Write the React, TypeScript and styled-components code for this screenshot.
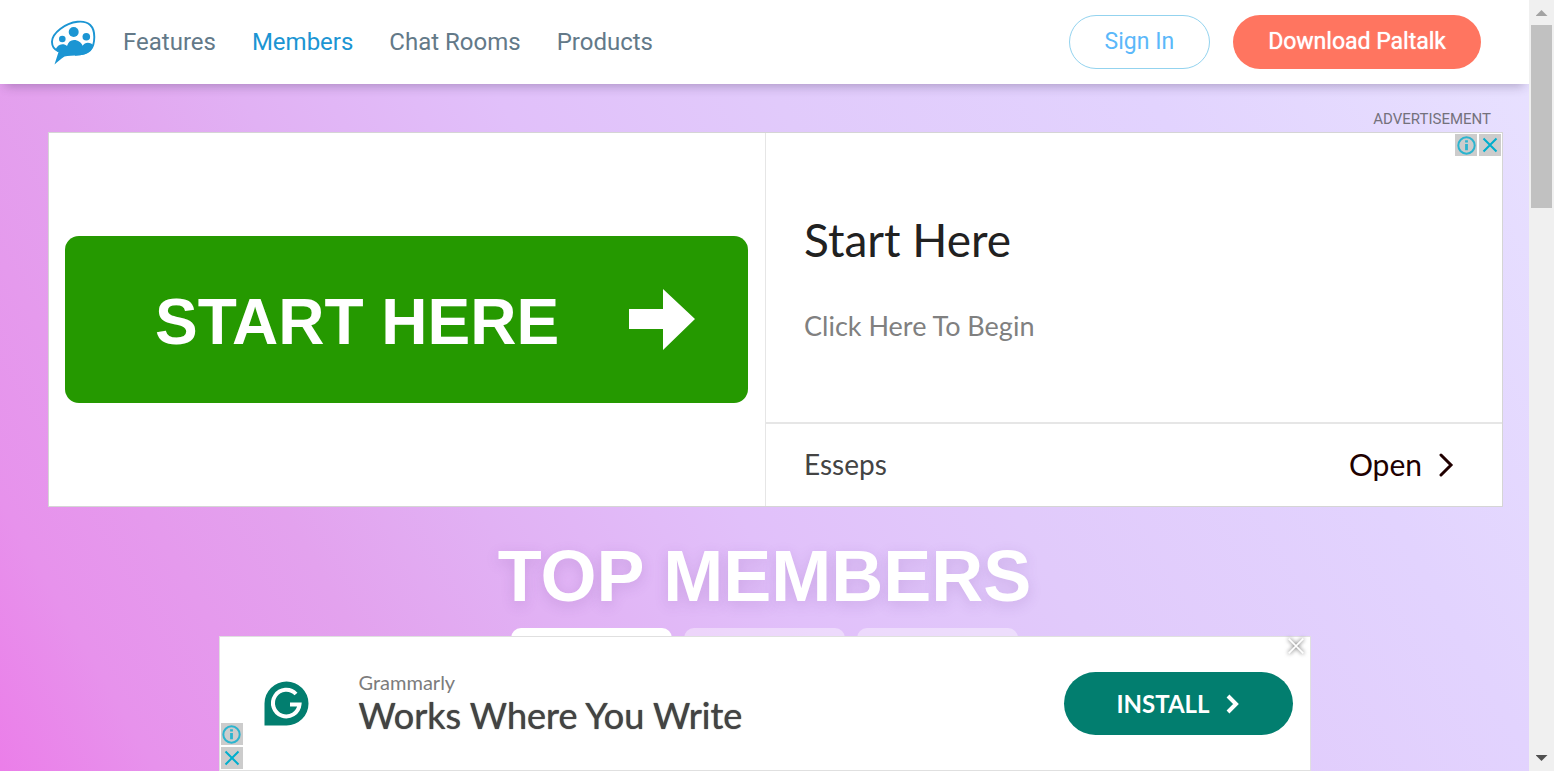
import React from "react";
import styled, { createGlobalStyle } from "styled-components";

const GlobalStyle = createGlobalStyle`
  *, *::before, *::after { box-sizing: border-box; }
  body {
    margin: 0;
    font-family: Roboto, "Liberation Sans", sans-serif;
    overflow: hidden;
  }
  button { font: inherit; border: 0; padding: 0; background: none; cursor: pointer; }
  a { color: inherit; text-decoration: none; }
  svg { display: block; flex: none; }
`;

const Window = styled.div`
  display: grid;
  grid-template-columns: minmax(0, 1fr) 25px;
  height: 100vh;
`;

const Page = styled.div`
  position: relative;
  display: flex;
  flex-direction: column;
  overflow: hidden;
  background: linear-gradient(
    60deg,
    #eb7ee9 0%,
    #e792ec 8%,
    #e3a2ee 22%,
    #e1b1f4 32%,
    #e1c0fa 45%,
    #e1cafb 59%,
    #e2d3fe 78%,
    #e8e2ff 100%
  );
`;

const Header = styled.header`
  display: flex;
  align-items: center;
  justify-content: space-between;
  flex: none;
  height: 84px;
  padding: 0 48px 0 50px;
  background: #fff;
  box-shadow: 0 7px 10px -5px rgba(60, 40, 80, 0.32);
`;

const HeaderSide = styled.div<{ $gap: number }>`
  display: flex;
  align-items: center;
  gap: ${(p) => p.$gap}px;
`;

const Nav = styled.nav`
  display: flex;
  gap: 36px;
`;

const NavLink = styled.a<{ $active?: boolean }>`
  font-size: 24px;
  line-height: 28px;
  color: ${(p) => (p.$active ? "#1b95d3" : "#637988")};
`;

const PillButton = styled.button<{ $solid?: boolean }>`
  height: 54px;
  padding: 0 35px 2px;
  border-radius: 27px;
  border: ${(p) => (p.$solid ? "0" : "1px solid #93d3ef")};
  background: ${(p) => (p.$solid ? "#ff7560" : "#fff")};
  color: ${(p) => (p.$solid ? "#fff" : "#5bb8fa")};
  font-size: 23px;
  text-shadow: ${(p) => (p.$solid ? "0 0 1px #fff" : "none")};
  white-space: nowrap;
`;

const Main = styled.main`
  display: flex;
  flex-direction: column;
  padding: 26px 26px 0 48px;
`;

const AdLabel = styled.div`
  padding-right: 12px;
  text-align: right;
  font-size: 15px;
  line-height: 18px;
  color: #74717c;
`;

const adFont = `Lato, "Open Sans", sans-serif`;

const TopAd = styled.section`
  position: relative;
  display: grid;
  grid-template-columns: 717px minmax(0, 1fr);
  height: 375px;
  margin-top: 4px;
  border: 1px solid #d5d5d5;
  background: #fff;
  font-family: ${adFont};
`;

const AdPicture = styled.a`
  display: flex;
  align-items: center;
  padding: 0 17px 0 16px;
  border-right: 1px solid #e6e6e6;
`;

const StartBanner = styled.span`
  display: flex;
  align-items: center;
  justify-content: space-between;
  flex: 1;
  height: 167px;
  padding: 0 53px 0 90px;
  border-radius: 14px;
  background: #259900;
  color: #fff;
  font: bold 64px/76px "Liberation Sans", Arial, sans-serif;
  white-space: nowrap;
`;

const StartText = styled.span`
  padding-top: 4px;
`;

const AdBody = styled.div`
  display: flex;
  flex-direction: column;
`;

const AdCopy = styled.div`
  flex: 1;
  padding: 77px 38px 0;
  border-bottom: 2px solid #e6e6e6;
`;

const AdTitle = styled.h2`
  margin: 0;
  font-size: 46px;
  line-height: 60px;
  font-weight: 400;
  color: #212121;
`;

const AdText = styled.p`
  margin: 38px 0 0;
  font-size: 27px;
  line-height: 36px;
  color: #808080;
`;

const AdFooter = styled.div`
  display: flex;
  align-items: center;
  justify-content: space-between;
  height: 82px;
  padding: 0 48px 2px 38px;
  font-size: 28px;
  color: #444;
`;

const OpenLink = styled.a`
  display: flex;
  align-items: center;
  gap: 16px;
  font-size: 30px;
  color: #200000;
`;

const AdChoices = styled.div<{ $vertical?: boolean }>`
  position: absolute;
  display: flex;
  gap: 2px;
  ${(p) =>
    p.$vertical
      ? "flex-direction: column; left: 1px; bottom: 1px;"
      : "top: 1px; right: 1px;"}
`;

const ChoiceButton = styled.button`
  display: grid;
  place-items: center;
  width: 22px;
  height: 22px;
  background: #ccc;
`;

const PageTitle = styled.h1`
  margin: 27px 0 0;
  text-align: center;
  font: bold 72px/84px "Liberation Sans", Arial, sans-serif;
  color: #fff;
  text-shadow: 0 4px 14px rgba(110, 60, 150, 0.18);
`;

const Centered = styled.div`
  margin: 0 -26px 0 -48px;
`;

const Tabs = styled.div`
  display: flex;
  justify-content: center;
  gap: 12px;
  margin-top: 10px;
`;

const Tab = styled.button<{ $active?: boolean }>`
  width: 161px;
  height: 48px;
  border-radius: 10px;
  background: ${(p) => (p.$active ? "#fff" : "rgba(255, 255, 255, 0.4)")};
`;

const BottomAd = styled.aside`
  position: absolute;
  left: 50%;
  bottom: 0;
  transform: translateX(-50%);
  display: flex;
  align-items: center;
  width: 1092px;
  max-width: 100%;
  height: 135px;
  padding: 0 17px 0 44px;
  border: 1px solid #e0e0e0;
  background: #fff;
  font-family: ${adFont};
`;

const BottomCopy = styled.div`
  flex: 1;
  margin-left: 50px;
  padding-bottom: 2px;
`;

const Brand = styled.div`
  font-size: 20px;
  line-height: 24px;
  color: #7c7c7c;
`;

const Slogan = styled.div`
  font-size: 36px;
  line-height: 42px;
  color: #434343;
  text-shadow: 0 0 1px #434343;
`;

const InstallButton = styled.button`
  display: flex;
  align-items: center;
  justify-content: center;
  gap: 16px;
  width: 229px;
  height: 63px;
  border-radius: 32px;
  background: #027e6f;
  color: #fff;
  font-size: 24px;
  font-weight: 700;
`;

const CloseButton = styled.button`
  position: absolute;
  top: 0;
  right: 5px;
  filter: drop-shadow(0 0 2px #444);
`;

const ScrollBar = styled.div`
  display: flex;
  flex-direction: column;
  align-items: center;
  justify-content: space-between;
  padding: 10px 2px 10px;
  background: #f0f0f0;
`;

const Thumb = styled.div`
  width: 21px;
  height: 183px;
  margin-top: 9px;
  background: #c1c1c1;
`;

const Arrow = styled.div<{ $down?: boolean }>`
  width: 12px;
  height: 6px;
  background: ${(p) => (p.$down ? "#505050" : "#a3a3a3")};
  clip-path: ${(p) =>
    p.$down
      ? "polygon(0 0, 100% 0, 50% 100%)"
      : "polygon(50% 0, 100% 100%, 0 100%)"};
`;

const ScrollTop = styled.div`
  display: flex;
  flex-direction: column;
  align-items: center;
`;

const Logo = () => (
  <svg width="46" height="45" viewBox="0 0 46 45" fill="#1b95d3" aria-hidden="true">
    <path
      d="M8.5 31.5C4 29.5 1.8 26 2 21.5C2.4 13 15 3.2 27.500 1.800C39 .6 44.300 6.500 44.300 17C44.300 29 39.500 34.500 25 34.700"
      fill="none"
      stroke="#1b95d3"
      strokeWidth="1.900"
    />
    <circle cx="23.700" cy="12" r="5" />
    <circle cx="12.300" cy="19" r="3.300" />
    <circle cx="36.300" cy="16.700" r="3.800" />
    <path d="M4.500 44.500L8.500 32C6.500 31 5.500 30 5.500 29.500C7 26.500 9 24.200 12.300 24.200C14.500 24.200 15.800 24.700 17 26C18.200 22.300 20.500 20 24 20C28 20 31.500 22.500 32.600 25.700C34 23.700 35.500 22.700 37.800 22.700C40.300 22.700 42 23.600 43.500 25.500C41.500 31.500 36.500 34.500 29 35.300C23 35.900 18 35.500 14.500 36.500C11 38.500 8 41.500 4.500 44.500Z" />
  </svg>
);

const GrammarlyLogo = () => (
  <svg width="45" height="45" viewBox="0 0 45 45" aria-hidden="true">
    <path d="M.5 44.500V22.500A22 22 0 1 1 22.500 44.500Z" fill="#027e6f" />
    <path
      d="M32 13A13.300 13.300 0 1 0 35.500 23.500H26"
      fill="none"
      stroke="#fff"
      strokeWidth="4"
    />
  </svg>
);

const InfoIcon = () => (
  <svg width="19" height="19" viewBox="0 0 19 19" fill="none" stroke="#2bb4cf" aria-hidden="true">
    <circle cx="9.500" cy="9.500" r="8.200" strokeWidth="2" />
    <path d="M9.500 8V14.300M9.500 4.200V6.600" strokeWidth="2.800" />
  </svg>
);

const CrossIcon = ({ color, size, weight }: { color: string; size: number; weight: number }) => (
  <svg width={size} height={size} viewBox="0 0 16 16" fill="none" stroke={color} strokeWidth={weight} aria-hidden="true">
    <path d="M1.500 1.500L14.500 14.500M14.500 1.500L1.500 14.500" />
  </svg>
);

const AdControls = ({ vertical }: { vertical?: boolean }) => (
  <AdChoices $vertical={vertical}>
    <ChoiceButton aria-label="About this ad">
      <InfoIcon />
    </ChoiceButton>
    <ChoiceButton aria-label="Close ad">
      <CrossIcon color="#00aecd" size={16} weight={2} />
    </ChoiceButton>
  </AdChoices>
);

export default function App() {
  return (
    <Window>
      <GlobalStyle />
      <Page>
        <Header>
          <HeaderSide $gap={27}>
            <a href="#home" aria-label="Paltalk">
              <Logo />
            </a>
            <Nav>
              <NavLink href="#features">Features</NavLink>
              <NavLink href="#members" $active>
                Members
              </NavLink>
              <NavLink href="#rooms">Chat Rooms</NavLink>
              <NavLink href="#products">Products</NavLink>
            </Nav>
          </HeaderSide>
          <HeaderSide $gap={23}>
            <PillButton>Sign In</PillButton>
            <PillButton $solid>Download Paltalk</PillButton>
          </HeaderSide>
        </Header>

        <Main>
          <AdLabel>ADVERTISEMENT</AdLabel>
          <TopAd>
            <AdPicture href="#start">
              <StartBanner>
                <StartText>START HERE</StartText>
                <svg width="66" height="62" viewBox="0 0 66 62" fill="#fff" aria-hidden="true">
                  <path d="M0 20H34V0L66 30L34 61V40H0Z" />
                </svg>
              </StartBanner>
            </AdPicture>
            <AdBody>
              <AdCopy>
                <AdTitle>Start Here</AdTitle>
                <AdText>Click Here To Begin</AdText>
              </AdCopy>
              <AdFooter>
                Esseps
                <OpenLink href="#open">
                  Open
                  <svg width="16" height="26" viewBox="0 0 16 26" fill="none" stroke="#200000" strokeWidth="3" strokeLinecap="round" aria-hidden="true">
                    <path d="M3 4L13 14L3 24" />
                  </svg>
                </OpenLink>
              </AdFooter>
            </AdBody>
            <AdControls />
          </TopAd>
          <Centered>
            <PageTitle>TOP MEMBERS</PageTitle>
            <Tabs>
              <Tab $active aria-label="First list" />
              <Tab aria-label="Second list" />
              <Tab aria-label="Third list" />
            </Tabs>
          </Centered>
        </Main>

        <BottomAd>
          <GrammarlyLogo />
          <BottomCopy>
            <Brand>Grammarly</Brand>
            <Slogan>Works Where You Write</Slogan>
          </BottomCopy>
          <InstallButton>
            INSTALL
            <svg width="14" height="20" viewBox="0 0 14 20" fill="none" stroke="#fff" strokeWidth="4" aria-hidden="true">
              <path d="M2 2L10 10L2 18" />
            </svg>
          </InstallButton>
          <CloseButton aria-label="Close banner">
            <CrossIcon color="#fff" size={18} weight={1.5} />
          </CloseButton>
          <AdControls vertical />
        </BottomAd>
      </Page>
      <ScrollBar>
        <ScrollTop>
          <Arrow />
          <Thumb />
        </ScrollTop>
        <Arrow $down />
      </ScrollBar>
    </Window>
  );
}
